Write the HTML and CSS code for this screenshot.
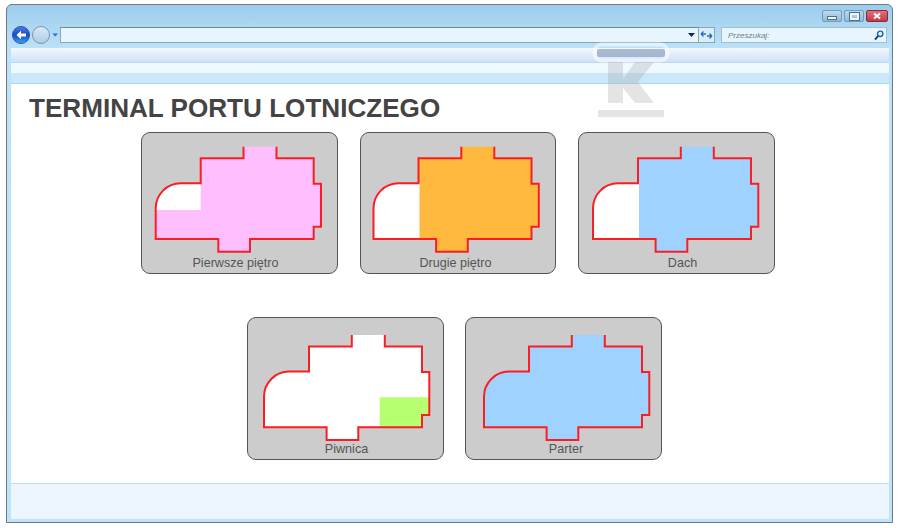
FILE: index.html
```html
<!DOCTYPE html>
<html lang="pl">
<head>
  <meta charset="UTF-8" />
  <title>Terminal portu lotniczego</title>
  <link rel="stylesheet" href="styles.css">
</head>
<body>
  <svg class="defs" width="0" height="0">
    <defs>
      <path id="plan" d="M87.8 0V11.6H45V36.6H25A25 25 0 0 0 0 61.6V92.3H62.6V105H94.3V92.3H158V80H165.3V37H158V11.6H120.8V0" />
    </defs>
  </svg>

  <div class="window">
    <div class="titlebar">
      <div class="controls">
        <span class="ctrl"><span class="ctrl-min"></span></span>
        <span class="ctrl"><span class="ctrl-max"></span></span>
        <span class="ctrl ctrl-close">
          <svg width="10" height="8" viewBox="0 0 10 8"><path d="M2 1.5 8 6.5M8 1.5 2 6.5" stroke="#fff" stroke-width="2" /></svg>
        </span>
      </div>
      <div class="navbar">
        <svg class="nav-icons" width="49" height="20" viewBox="0 0 49 20">
          <defs>
            <linearGradient id="backFill" x1="0" y1="0" x2="0" y2="1">
              <stop offset="0" stop-color="#4f7fe8" />
              <stop offset="0.5" stop-color="#1a47c8" />
              <stop offset="1" stop-color="#38a8f0" />
            </linearGradient>
            <linearGradient id="fwdFill" x1="0" y1="0" x2="0" y2="1">
              <stop offset="0" stop-color="#dcebf6" />
              <stop offset="1" stop-color="#a9cbe3" />
            </linearGradient>
          </defs>
          <circle cx="9" cy="10" r="8.5" fill="url(#backFill)" stroke="#2a55a8" />
          <path d="M4.5 10 9 5.8V8.5H14V11.5H9V14.2Z" fill="#fff" />
          <circle cx="29" cy="10" r="8.5" fill="url(#fwdFill)" stroke="#7c97ad" />
          <path d="M40.5 8.5H46L43.2 11.5Z" fill="#2a6fc0" />
        </svg>
        <div class="address">
          <svg width="7" height="4" viewBox="0 0 7 4"><path d="M0 0H7L3.5 4Z" fill="#12206e" /></svg>
        </div>
        <div class="refresh">
          <svg width="13" height="10" viewBox="0 0 13 10">
            <path d="M1 4H6M1 4 3.5 1.5M1 4 3.5 6.5" stroke="#2a6fd0" stroke-width="1.4" fill="none" />
            <path d="M12 6H7M12 6 9.5 3.5M12 6 9.5 8.5" stroke="#1c6fd0" stroke-width="1.4" fill="none" />
          </svg>
        </div>
        <div class="search">
          <span class="search-text">Przeszukaj:</span>
          <svg width="10" height="11" viewBox="0 0 10 11">
            <circle cx="6.2" cy="3.8" r="2.7" fill="#e8f4fc" stroke="#1b5fc4" stroke-width="1.4" />
            <path d="M4.2 5.8 1 9.6" stroke="#123f9a" stroke-width="2" />
          </svg>
        </div>
      </div>
    </div>

    <div class="inner">
      <div class="toolbar-top"></div>
      <div class="toolbar-bottom"></div>
      <div class="content">
        <h1>TERMINAL PORTU LOTNICZEGO</h1>
        <div class="row row-first">
          <div class="card">
            <svg class="plan" width="197" height="123" viewBox="0 0 197 123">
              <g transform="translate(14.7 13.7)">
                <use href="#plan" class="fill-pink" />
                <path d="M0 63.3V61.6A25 25 0 0 1 25 36.6H45V63.3Z" class="fill-white" />
                <use href="#plan" class="outline" />
              </g>
            </svg>
            <span class="card-label label-first">Pierwsze piętro</span>
          </div>
          <div class="card card-narrow">
            <svg class="plan" width="197" height="123" viewBox="0 0 197 123">
              <g transform="translate(13.5 13.7)">
                <use href="#plan" class="fill-orange" />
                <path d="M0 92.3V61.6A25 25 0 0 1 25 36.6H46V92.3Z" class="fill-white" />
                <use href="#plan" class="outline" />
              </g>
            </svg>
            <span class="card-label label-second">Drugie piętro</span>
          </div>
          <div class="card">
            <svg class="plan" width="197" height="123" viewBox="0 0 197 123">
              <g transform="translate(15 13.7)">
                <use href="#plan" class="fill-blue" />
                <path d="M0 92.3V61.6A25 25 0 0 1 25 36.6H46V92.3Z" class="fill-white" />
                <use href="#plan" class="outline" />
              </g>
            </svg>
            <span class="card-label label-roof">Dach</span>
          </div>
        </div>
        <div class="row row-second">
          <div class="card card-tall">
            <svg class="plan" width="197" height="124" viewBox="0 0 197 124">
              <g transform="translate(17 17)">
                <use href="#plan" class="fill-white" />
                <path d="M115.7 62.3H165.3V80H158V92.3H115.7Z" class="fill-green" />
                <use href="#plan" class="outline" />
              </g>
            </svg>
            <span class="card-label label-basement">Piwnica</span>
          </div>
          <div class="card card-tall">
            <svg class="plan" width="197" height="124" viewBox="0 0 197 124">
              <g transform="translate(19 17)">
                <use href="#plan" class="fill-blue" />
                <use href="#plan" class="outline" />
              </g>
            </svg>
            <span class="card-label label-ground">Parter</span>
          </div>
        </div>
      </div>
      <div class="statusbar"></div>
    </div>

    <svg class="watermark" width="80" height="76" viewBox="0 0 80 76">
      <rect x="2.5" y="2.5" width="73" height="16" rx="7" fill="none" stroke="#fff" stroke-width="4" opacity="0.55" />
      <rect x="5" y="7" width="68" height="8" rx="2" fill="#7f93b8" opacity="0.6" />
      <path d="M16 20H31V37L43 20H62L46 40L62 61H43L31 46V61H16Z" fill="#9a9a9a" opacity="0.27" />
      <rect x="6" y="68" width="66" height="7" fill="#9a9a9a" opacity="0.27" />
    </svg>
  </div>
</body>
</html>
```

FILE: styles.css
```css
html, body {
  margin: 0;
  height: 100%;
  background: #fff;
}
body {
  font-family: "Liberation Sans", Arial, sans-serif;
  padding: 4px 5px 5px 6px;
  box-sizing: border-box;
}
.defs {
  position: absolute;
}
.window {
  position: relative;
  height: 519px;
  box-sizing: border-box;
  border: 1px solid #6d7880;
  border-radius: 6px 6px 0 0;
  background: linear-gradient(#9ccdec, #bde2f8 45px, #bfe4fa);
  padding: 0 3px 3px 4px;
  display: flex;
  flex-direction: column;
}
.titlebar {
  height: 43px;
  flex-shrink: 0;
  display: flex;
  flex-direction: column;
}
.controls {
  height: 17px;
  display: flex;
  justify-content: flex-end;
  align-items: flex-end;
  gap: 2px;
  padding-right: 1px;
}
.ctrl {
  width: 18px;
  height: 10px;
  border: 1px solid #6f9cbc;
  border-radius: 2px;
  background: linear-gradient(#bcd9ec, #8fbbd8);
  display: flex;
  align-items: center;
  justify-content: center;
}
.ctrl-close {
  width: 20px;
  border-color: #8a2a36;
  background: linear-gradient(#e0707a, #c23c4a);
}
.ctrl-min {
  width: 8px;
  height: 2px;
  background: #eef6fb;
  border: 1px solid #4d708a;
  margin-top: 3px;
}
.ctrl-max {
  width: 5px;
  height: 3px;
  border: 2px solid #eef6fb;
  outline: 1px solid #4d708a;
}
.navbar {
  display: flex;
  align-items: center;
  height: 18px;
  margin-top: 4px;
}
.nav-icons {
  flex-shrink: 0;
  margin-left: 1px;
  margin-right: -1px;
}
.address {
  width: 639px;
  height: 16px;
  box-sizing: border-box;
  border: 1px solid #8ea5b5;
  border-top-color: #6f8796;
  background: #e6f5fe;
  display: flex;
  align-items: center;
  justify-content: flex-end;
  padding-right: 3px;
}
.refresh {
  width: 16px;
  height: 16px;
  box-sizing: border-box;
  border: 1px solid #8ea5b5;
  border-left: 0;
  background: #d8eefb;
  display: flex;
  align-items: center;
  justify-content: center;
}
.search {
  width: 166px;
  height: 16px;
  margin-left: 6px;
  box-sizing: border-box;
  border: 1px solid #a8bfce;
  background: #e6f5fe;
  display: flex;
  align-items: center;
  justify-content: space-between;
  padding: 0 2px 0 6px;
}
.search-text {
  font-size: 8px;
  font-style: italic;
  color: #6d7f8c;
}
.inner {
  flex: 1;
  display: flex;
  flex-direction: column;
  min-height: 0;
}
.toolbar-top {
  height: 14px;
  flex-shrink: 0;
  background: linear-gradient(#f2f8fe, #cfe0f8);
  border-bottom: 1px solid #bcd8ee;
}
.toolbar-bottom {
  height: 20px;
  flex-shrink: 0;
  background: linear-gradient(#eefaff 50%, #c9e8fb 50%);
  border-bottom: 1px solid #a9d9f2;
}
.content {
  flex: 1;
  background: #fff;
}
h1 {
  margin: 0;
  padding: 11px 0 0 18px;
  font-size: 26.1px;
  line-height: 26px;
  font-weight: bold;
  color: #444;
}
.row {
  display: flex;
}
.row-first {
  margin-top: 11px;
  padding-left: 130px;
  gap: 22px;
}
.row-second {
  margin-top: 43px;
  padding-left: 236px;
  gap: 21px;
}
.card {
  width: 197px;
  height: 142px;
  box-sizing: border-box;
  border: 1px solid #555;
  border-radius: 9px;
  background: #ccc;
  display: flex;
  flex-direction: column;
  align-items: center;
  overflow: hidden;
}
.card-narrow {
  width: 196px;
}
.card-tall {
  height: 143px;
}
.plan {
  display: block;
  flex-shrink: 0;
  margin-left: -1px;
  margin-right: -1px;
}
.card-label {
  font-size: 12.6px;
  line-height: 15px;
  color: #555;
}
.label-first { margin-left: -8px; }
.label-second { margin-left: -5px; }
.label-roof { margin-left: 12px; }
.label-basement { margin-left: 2px; }
.label-ground { margin-left: 5px; }
.fill-pink { fill: #ffbfff; }
.fill-orange { fill: #ffb93f; }
.fill-blue { fill: #9fd2ff; }
.fill-green { fill: #b6ff70; }
.fill-white { fill: #fff; }
.outline {
  fill: none;
  stroke: #fa1e24;
  stroke-width: 2;
}
.statusbar {
  height: 35px;
  flex-shrink: 0;
  background: #ecf6fe;
  border-top: 1px solid #bfe0f4;
}
.watermark {
  position: absolute;
  left: 585px;
  top: 37px;
}
```
